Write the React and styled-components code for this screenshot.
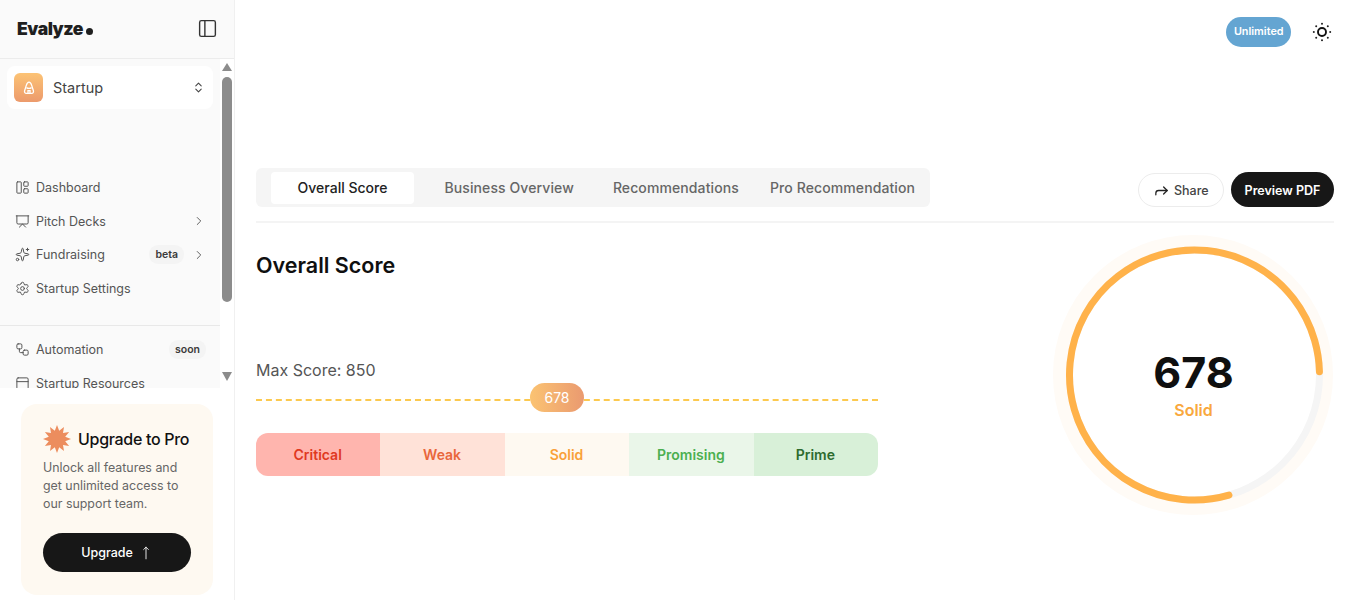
import React from "react";
import styled, { createGlobalStyle } from "styled-components";
import {
  ChevronRight,
  ChevronsUpDown,
  Forward,
  LayoutPanelLeft,
  MoveUp,
  PanelLeft,
  PanelTop,
  Presentation,
  Settings,
  Sparkles,
  Workflow,
} from "lucide-react";

const GlobalStyle = createGlobalStyle`
  html, body {
    margin: 0;
    height: 100%;
    background: #fff;
    overflow: hidden;
  }
  body {
    font-family: Inter, "Liberation Sans", sans-serif;
    color: #0f0f0f;
  }
  * {
    box-sizing: border-box;
  }
`;

const navItems = [
  { label: "Dashboard", icon: LayoutPanelLeft },
  { label: "Pitch Decks", icon: Presentation, arrow: true },
  { label: "Fundraising", icon: Sparkles, badge: "beta", arrow: true },
  { label: "Startup Settings", icon: Settings },
];

const levels = [
  { label: "Critical", bg: "#ffb5ae", color: "#e0391f" },
  { label: "Weak", bg: "#ffe2d8", color: "#e9673c" },
  { label: "Solid", bg: "#fef9f1", color: "#f9a13a" },
  { label: "Promising", bg: "#eaf6e9", color: "#4caf50" },
  { label: "Prime", bg: "#d8f0d8", color: "#2e6b2e" },
];

const tabs = [
  "Overall Score",
  "Business Overview",
  "Recommendations",
  "Pro Recommendation",
];

const burstPoints = () => {
  const points = [];
  for (let i = 0; i < 24; i++) {
    const radius = i % 2 === 0 ? 14 : 8.5;
    const angle = (i * Math.PI) / 12 - Math.PI / 2;
    points.push(
      `${(14 + radius * Math.cos(angle)).toFixed(2)},${(14 + radius * Math.sin(angle)).toFixed(2)}`
    );
  }
  return points.join(" ");
};

const SunIcon = () => {
  const dots = [0, 1, 2, 3, 4, 5, 6, 7].map((i) => {
    const angle = (i * Math.PI) / 4;
    return {
      cx: 10 + 8.2 * Math.cos(angle),
      cy: 10 + 8.2 * Math.sin(angle),
    };
  });
  return (
    <svg width="20" height="20" viewBox="0 0 20 20">
      <circle cx="10" cy="10" r="4" fill="none" stroke="#111" strokeWidth="1.9" />
      {dots.map((dot, i) => (
        <circle key={i} cx={dot.cx} cy={dot.cy} r="1" fill="#222" />
      ))}
    </svg>
  );
};

const ConeIcon = () => (
  <svg width="12" height="14" viewBox="0 0 12 14" fill="none" stroke="#fff" strokeWidth="1.3">
    <path d="M6 1.2c1.5 0 2.2 1.6 2.7 3.2l1.7 5.4c.4 1.3-.4 2.6-1.8 2.6H3.4c-1.4 0-2.2-1.3-1.8-2.6l1.7-5.4C3.8 2.8 4.5 1.2 6 1.2z" />
    <path d="M3.4 6.6c1.6 1 3.6 1 5.2 0M5 12.2V9.6h2v2.6" />
  </svg>
);

const ScoreRing = () => {
  const radius = 125;
  const circumference = 2 * Math.PI * radius;
  const filled = circumference * 0.79;
  return (
    <Ring>
      <svg width="280" height="280" viewBox="0 0 280 280">
        <circle cx="140" cy="140" r="133" fill="none" stroke="#fffbf6" strokeWidth="14" />
        <circle cx="141.5" cy="140" r={radius} fill="none" stroke="#f5f5f5" strokeWidth="7" />
        <circle
          cx="141.5"
          cy="140"
          r={radius}
          fill="none"
          stroke="#ffb24a"
          strokeWidth="7"
          strokeLinecap="round"
          strokeDasharray={`${filled} ${circumference}`}
          transform="rotate(74 141.5 140)"
        />
      </svg>
      <RingLabel>
        <RingScore>678</RingScore>
        <RingLevel>Solid</RingLevel>
      </RingLabel>
    </Ring>
  );
};

const App = () => {
  return (
    <Page>
      <GlobalStyle />
      <Sidebar>
        <Brand>
          <Logo>
            Evalyze<LogoDot />
          </Logo>
          <PanelLeft size={21} strokeWidth={1.6} color="#333" />
        </Brand>
        <NavArea>
          <NavScroll>
            <Switcher>
              <SwitcherIcon>
                <ConeIcon />
              </SwitcherIcon>
              <SwitcherName>Startup</SwitcherName>
              <ChevronsUpDown size={13} color="#444" />
            </Switcher>
            <NavGroup>
              {navItems.map((item) => (
                <NavItem key={item.label}>
                  <item.icon size={15} strokeWidth={1.6} />
                  <NavLabel>{item.label}</NavLabel>
                  {item.badge && <Badge>{item.badge}</Badge>}
                  {item.arrow && (
                    <ArrowSlot>
                      <ChevronRight size={14} strokeWidth={1.6} />
                    </ArrowSlot>
                  )}
                </NavItem>
              ))}
            </NavGroup>
            <NavDivider />
            <NavItem>
              <Workflow size={15} strokeWidth={1.6} />
              <NavLabel>Automation</NavLabel>
              <Badge>soon</Badge>
            </NavItem>
            <NavItem>
              <PanelTop size={15} strokeWidth={1.6} />
              <NavLabel>Startup Resources</NavLabel>
            </NavItem>
          </NavScroll>
          <ScrollRail>
            <ScrollArrow />
            <ScrollThumb />
            <ScrollArrow $down />
          </ScrollRail>
        </NavArea>
        <SidebarFoot>
          <UpgradeCard>
            <UpgradeHead>
              <svg width="28" height="28" viewBox="0 0 28 28">
                <polygon points={burstPoints()} fill="#ec8d5e" />
              </svg>
              <UpgradeTitle>Upgrade to Pro</UpgradeTitle>
            </UpgradeHead>
            <UpgradeText>
              Unlock all features and get unlimited access to our support team.
            </UpgradeText>
            <UpgradeButton>
              Upgrade
              <MoveUp size={14} strokeWidth={1.5} />
            </UpgradeButton>
          </UpgradeCard>
        </SidebarFoot>
      </Sidebar>
      <Main>
        <TopBar>
          <PlanPill>Unlimited</PlanPill>
          <SunIcon />
        </TopBar>
        <TabRow>
          <TabList>
            {tabs.map((tab, index) => (
              <Tab key={tab} $active={index === 0}>
                {tab}
              </Tab>
            ))}
          </TabList>
          <Actions>
            <ShareButton>
              <Forward size={17} strokeWidth={1.8} color="#222" />
              Share
            </ShareButton>
            <PreviewButton>Preview PDF</PreviewButton>
          </Actions>
        </TabRow>
        <Content>
          <ScoreColumn>
            <Heading>Overall Score</Heading>
            <MaxScore>Max Score: 850</MaxScore>
            <Track>
              <Marker>678</Marker>
            </Track>
            <Levels>
              {levels.map((level) => (
                <Level key={level.label} $bg={level.bg} $color={level.color}>
                  {level.label}
                </Level>
              ))}
            </Levels>
          </ScoreColumn>
          <ScoreRing />
        </Content>
      </Main>
    </Page>
  );
};

const Page = styled.div`
  display: flex;
  height: 600px;
  overflow: hidden;
`;

const Sidebar = styled.aside`
  flex: 0 0 235px;
  display: flex;
  flex-direction: column;
  border-right: 1px solid #f0f0f0;
`;

const Brand = styled.div`
  height: 59px;
  flex: none;
  display: flex;
  align-items: center;
  justify-content: space-between;
  padding: 0 16px 2px 17px;
  background: #fafafa;
  border-bottom: 1px solid #ececec;
`;

const Logo = styled.div`
  display: flex;
  align-items: baseline;
  font-size: 17.6px;
  font-weight: 900;
  letter-spacing: -0.5px;
  color: #1f1f1f;
`;

const LogoDot = styled.span`
  width: 7px;
  height: 7px;
  margin-left: 3px;
  border-radius: 50%;
  background: #1f1f1f;
`;

const NavArea = styled.div`
  height: 329px;
  flex: none;
  display: flex;
`;

const NavScroll = styled.div`
  width: 220px;
  overflow: hidden;
  padding-top: 7px;
  background: #fafafa;
`;

const ScrollRail = styled.div`
  flex: 1;
  display: flex;
  flex-direction: column;
  align-items: center;
  padding: 4px 0 7px;
`;

const ScrollArrow = styled.span`
  flex: none;
  width: 0;
  height: 0;
  margin: ${(props) => (props.$down ? "auto 0 0" : "0 0 6px")};
  border-left: 5px solid transparent;
  border-right: 5px solid transparent;
  border-top: ${(props) => (props.$down ? "9px solid #8c8c8c" : "0")};
  border-bottom: ${(props) => (props.$down ? "0" : "8px solid #8c8c8c")};
`;

const ScrollThumb = styled.span`
  flex: none;
  width: 10px;
  height: 225px;
  border-radius: 5px;
  background: #8c8c8c;
`;

const Switcher = styled.div`
  display: flex;
  align-items: center;
  gap: 10px;
  height: 43px;
  margin: 0 7px;
  padding: 0 8px 0 7px;
  background: #fff;
  border-radius: 8px;
`;

const SwitcherIcon = styled.span`
  display: flex;
  align-items: center;
  justify-content: center;
  width: 29px;
  height: 29px;
  border-radius: 6px;
  background: linear-gradient(#fcc375, #ec9a6c);
`;

const SwitcherName = styled.span`
  flex: 1;
  font-size: 14.5px;
  color: #444;
`;

const NavGroup = styled.div`
  margin-top: 61.5px;
`;

const NavItem = styled.div`
  display: flex;
  align-items: center;
  gap: 6px;
  height: 33.7px;
  padding: 0 14px 0 15px;
  font-size: 12.5px;
  color: #555;
`;

const NavLabel = styled.span`
  flex: 1;
  white-space: nowrap;
`;

const Badge = styled.span`
  padding: 3px 6px;
  border-radius: 9px;
  background: #f4f4f4;
  font-size: 10.5px;
  font-weight: 600;
  color: #3a3a3a;
`;

const ArrowSlot = styled.span`
  display: flex;
  width: 14px;
  margin-left: 2px;
`;

const NavDivider = styled.div`
  height: 1px;
  margin: 19.5px 0 7px;
  background: #e8e8e8;
`;

const SidebarFoot = styled.div`
  flex: 1;
  padding: 16px 21px 0;
`;

const UpgradeCard = styled.div`
  height: 191px;
  padding: 21px 22px 0;
  background: #fef9f1;
  border-radius: 16px;
`;

const UpgradeHead = styled.div`
  display: flex;
  align-items: center;
  gap: 7px;
`;

const UpgradeTitle = styled.span`
  font-size: 16px;
  font-weight: 500;
  letter-spacing: -0.3px;
  white-space: nowrap;
  color: #111;
`;

const UpgradeText = styled.p`
  margin: 6px 0 0;
  font-size: 12.4px;
  line-height: 18px;
  color: #666;
`;

const UpgradeButton = styled.button`
  display: flex;
  align-items: center;
  justify-content: center;
  gap: 6px;
  width: 148px;
  height: 39px;
  margin-top: 20px;
  border: 0;
  border-radius: 20px;
  background: #171717;
  color: #fff;
  font: 500 12.5px Inter, sans-serif;
`;

const Main = styled.main`
  flex: 1;
  min-width: 0;
  padding: 0 17px 0 21px;
`;

const TopBar = styled.div`
  display: flex;
  align-items: center;
  justify-content: flex-end;
  gap: 21px;
  height: 63px;
  padding-right: 2px;
`;

const PlanPill = styled.span`
  display: flex;
  align-items: center;
  height: 30px;
  padding: 0 7.5px;
  border-radius: 15px;
  background: #64a5d2;
  color: #fff;
  font-size: 10.8px;
  font-weight: 600;
`;

const TabRow = styled.div`
  display: flex;
  align-items: flex-end;
  justify-content: space-between;
  margin-top: 105px;
  padding-bottom: 14px;
  border-bottom: 2px solid #f4f4f4;
`;

const TabList = styled.div`
  display: grid;
  grid-template-columns: repeat(4, 143px);
  gap: 23.7px;
  padding: 4px 16px 3px 15px;
  background: #f5f5f5;
  border-radius: 6px;
`;

const Tab = styled.div`
  display: flex;
  align-items: center;
  justify-content: center;
  height: 32px;
  padding-bottom: 2px;
  white-space: nowrap;
  font-size: 14px;
  font-weight: 500;
  letter-spacing: ${(props) => (props.$active ? "0" : "0.1px")};
  border-radius: 4px;
  color: ${(props) => (props.$active ? "#222" : "#666")};
  background: ${(props) => (props.$active ? "#fff" : "transparent")};
`;

const Actions = styled.div`
  display: flex;
  align-items: flex-end;
  gap: 7px;
`;

const ShareButton = styled.button`
  display: flex;
  align-items: center;
  gap: 4px;
  height: 34px;
  width: 86px;
  padding: 0 0 0 14px;
  border: 1px solid #ececec;
  border-radius: 17px;
  background: #fff;
  color: #444;
  font: 500 12.5px Inter, sans-serif;
`;

const PreviewButton = styled.button`
  height: 35px;
  width: 103px;
  padding: 1px 0 0;
  border: 0;
  border-radius: 18px;
  background: #171717;
  color: #fff;
  font: 600 12.5px Inter, sans-serif;
`;

const Content = styled.div`
  display: flex;
  justify-content: space-between;
  align-items: flex-start;
  padding-top: 12px;
`;

const ScoreColumn = styled.div`
  width: 622px;
`;

const Heading = styled.h2`
  margin: 16px 0 0;
  font-size: 21.5px;
  line-height: 28px;
  font-weight: 600;
  color: #0f0f0f;
`;

const MaxScore = styled.div`
  margin-top: 80px;
  font-size: 16px;
  line-height: 22px;
  color: #555;
`;

const Track = styled.div`
  position: relative;
  height: 0;
  margin-top: 18px;
  border-top: 2px dashed #fcc94f;
`;

const Marker = styled.span`
  position: absolute;
  left: 274px;
  top: -18px;
  display: flex;
  align-items: center;
  justify-content: center;
  width: 54px;
  height: 29px;
  border-radius: 15px;
  background: linear-gradient(90deg, #fbc372, #ea9a70);
  color: #fff;
  font-size: 14px;
  font-weight: 400;
`;

const Levels = styled.div`
  display: grid;
  grid-template-columns: repeat(5, 1fr);
  height: 43px;
  margin-top: 32px;
  border-radius: 12px;
  overflow: hidden;
`;

const Level = styled.div`
  display: flex;
  align-items: center;
  justify-content: center;
  padding: 0 1px 1px 0;
  font-size: 14px;
  font-weight: 600;
  background: ${(props) => props.$bg};
  color: ${(props) => props.$color};
`;

const Ring = styled.div`
  display: grid;
  width: 280px;
  height: 280px;
  margin-right: 1px;

  & > * {
    grid-area: 1 / 1;
  }
`;

const RingLabel = styled.div`
  display: flex;
  flex-direction: column;
  align-items: center;
  justify-content: center;
  padding: 17px 0 0 1px;
`;

const RingScore = styled.div`
  font-size: 43px;
  line-height: 48px;
  font-weight: 700;
  color: #0f0f0f;
`;

const RingLevel = styled.div`
  margin-top: 4px;
  font-size: 16px;
  line-height: 20px;
  font-weight: 600;
  color: #f9a83d;
`;

export default App;
